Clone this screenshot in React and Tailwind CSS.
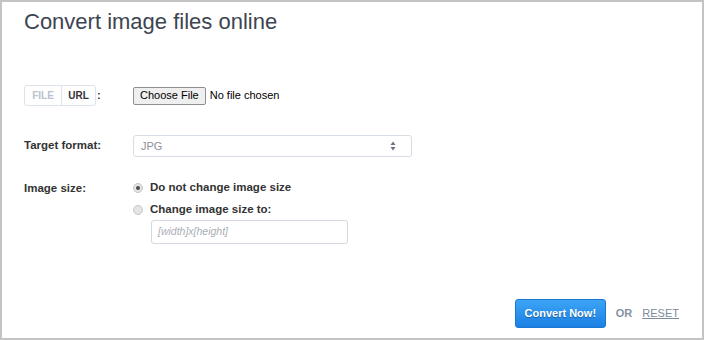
import React from 'react';

const Radio = ({ checked }) => (
  <span className="w-[10px] h-[10px] rounded-full bg-[#e4e4e4] border border-[#c6c6c6] flex items-center justify-center shrink-0">
    {checked && <span className="w-[4px] h-[4px] rounded-full bg-[#4b4b4b]" />}
  </span>
);

const App = () => {
  return (
    <div className="w-[704px] h-[340px] bg-white border-2 border-[#c4c4c4] pl-[22px] pr-[23px] pt-[7px] font-['Liberation_Sans',Arial,sans-serif] text-[#333] flex flex-col">
      <h1 className="text-[22px] leading-[26px] text-[#3d4451] font-normal">Convert image files online</h1>

      {/* source */}
      <div className="mt-[50px] flex items-center h-[21px]">
        <div className="w-[109px] flex items-center shrink-0">
          <div className="flex h-[21px] border border-[#dde3ea] rounded-[3px] text-[10px] font-bold">
            <span className="w-[37px] flex items-center justify-center text-[#b9c2cc] border-r border-[#dde3ea]">FILE</span>
            <span className="w-[33px] flex items-center justify-center text-[#333]">URL</span>
          </div>
          <span className="ml-[1px] text-[11px] font-bold">:</span>
        </div>
        <div className="flex items-center text-[11px] text-black">
          <span className="h-[18px] px-[6px] flex items-center bg-[#efefef] border border-[#8f8f8f] rounded-[2px]">Choose File</span>
          <span className="ml-[4px]">No file chosen</span>
        </div>
      </div>

      {/* format */}
      <div className="mt-[29px] flex items-center h-[22px]">
        <div className="w-[109px] text-[11.5px] font-bold shrink-0">Target format:</div>
        <div className="w-[279px] h-[22px] border border-[#d6dde4] rounded-[3px] flex items-center justify-between pl-[7px] pr-[15px] text-[11px] text-[#8a9099]">
          <span>JPG</span>
          <svg width="6" height="10" viewBox="0 0 6 10">
            <path d="M3 0.5 L5.5 4 L0.5 4 Z" fill="#6b7280" />
            <path d="M3 9.5 L5.5 6 L0.5 6 Z" fill="#6b7280" />
          </svg>
        </div>
      </div>

      {/* size */}
      <div className="mt-[22px] flex items-start">
        <div className="w-[109px] leading-[18px] text-[11.5px] font-bold shrink-0">Image size:</div>
        <div className="flex flex-col">
          <div className="flex items-center h-[18px] gap-[7px] text-[11.5px] font-bold">
            <Radio checked />
            <span>Do not change image size</span>
          </div>
          <div className="mt-[4px] flex items-center h-[18px] gap-[7px] text-[11.5px] font-bold">
            <Radio />
            <span>Change image size to:</span>
          </div>
          <div className="mt-[1px] ml-[18px] w-[197px] h-[24px] border border-[#d3d9e0] rounded-[3px] flex items-center pl-[6px] text-[10.5px] italic text-[#a9aeb5]">
            [width]x[height]
          </div>
        </div>
      </div>

      {/* actions */}
      <div className="mt-[55px] flex items-center justify-end">
        <button className="w-[91px] h-[29px] rounded-[3px] border border-[#1b76cf] bg-gradient-to-b from-[#3ca4f6] to-[#1a80e4] text-white text-[11px] font-bold [text-shadow:0_1px_1px_rgba(0,0,0,0.35)]">
          Convert Now!
        </button>
        <span className="ml-[10px] text-[11px] font-bold text-[#8592a3]">OR</span>
        <a className="ml-[10px] text-[11px] text-[#7d8a9a] underline">RESET</a>
      </div>
    </div>
  );
};

export default App;
